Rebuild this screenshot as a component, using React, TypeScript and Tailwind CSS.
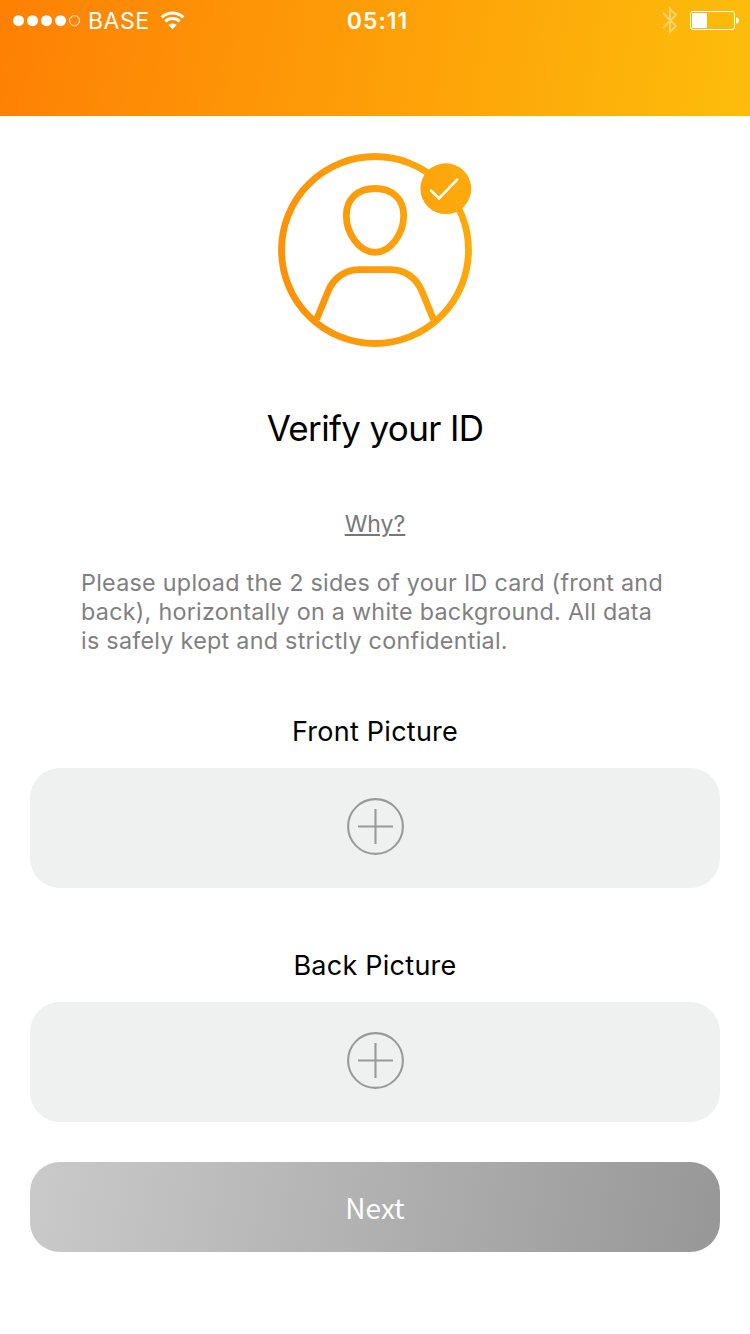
function PlusIcon() {
  return (
    <svg width="57" height="57" viewBox="0 0 57 57" fill="none" stroke="#999999" strokeWidth="2.1">
      <circle cx="28.5" cy="28.5" r="27.4" />
      <path d="M11 28.5H46M28.5 11V46" />
    </svg>
  );
}

function StatusBar() {
  return (
    <div className="relative flex h-[42px] items-center justify-between pl-[13px] pr-[10px] text-white">
      <div className="flex items-center">
        <svg width="67" height="12" viewBox="0 0 67 12" fill="currentColor">
          <circle cx="5.5" cy="5.7" r="5.5" />
          <circle cx="19.5" cy="5.7" r="5.5" />
          <circle cx="33.5" cy="5.7" r="5.5" />
          <circle cx="47.5" cy="5.7" r="5.5" />
          <circle cx="61.5" cy="5.7" r="5" fill="none" stroke="currentColor" />
        </svg>
        <span className="ml-[8px] w-[72px] text-[23px] leading-[42px] tracking-[0.5px]">BASE</span>
        <svg className="-mt-px" width="25" height="19" viewBox="0 0 25 19" fill="none" stroke="currentColor" strokeWidth="3">
          <path d="M1.6 6.3A15.8 15.8 0 0 1 23.4 6.3" />
          <path d="M5.3 10.3A10.5 10.5 0 0 1 19.7 10.3" />
          <path d="M12.5 18.3L8.3 14.1A6 6 0 0 1 16.7 14.1Z" fill="currentColor" stroke="none" />
        </svg>
      </div>
      <div className="flex items-center">
        <svg className="-mt-[2px]" width="16" height="27" viewBox="0 0 16 27" fill="none" stroke="#ffffff" strokeOpacity="0.4" strokeWidth="2">
          <path d="M1 6L14 19L8 25V2L14 8L1 21" />
        </svg>
        <svg className="ml-[12px]" width="50" height="20" viewBox="0 0 50 20">
          <rect x="0.5" y="0.5" width="44" height="18" rx="2.5" fill="none" stroke="#ffffff" />
          <rect x="2" y="2" width="15" height="15" rx="1" fill="#ffffff" />
          <path d="M46 6.5C48.2 6.5 49 8 49 9.5S48.2 12.5 46 12.5Z" fill="#ffffff" />
        </svg>
      </div>
      <div className="absolute inset-x-0 top-0 pl-[5px] text-center text-[23px] leading-[42px] font-semibold tracking-[1px]">05:11</div>
    </div>
  );
}

function IdBadge() {
  return (
    <svg width="194" height="194" viewBox="0 0 194 194" fill="none">
      <defs>
        <linearGradient id="amber" gradientUnits="userSpaceOnUse" x1="0" y1="110" x2="194" y2="84">
          <stop offset="0" stopColor="#fd9109" />
          <stop offset="1" stopColor="#fcaa0b" />
        </linearGradient>
      </defs>
      <g stroke="url(#amber)" strokeWidth="6.8">
        <circle cx="97" cy="97" r="93.5" />
        <path d="M97 35.5C80 35.5 68.3 46 68.3 62.5C68.3 80 81 99.3 97 99.3S125.7 80 125.7 62.5C125.7 46 114 35.5 97 35.5Z" />
        <path d="M38.5 166.5L50 138.5C56 124 68 116.700 81 116.700H113C126 116.700 138 124 144 138.500L155.500 166.500" />
      </g>
      <circle cx="167.8" cy="35.7" r="25.4" fill="url(#amber)" />
      <path d="M152.3 37L161 45.3L179.8 25.8" stroke="#ffffff" strokeWidth="2.6" />
    </svg>
  );
}

function UploadBox({ label }: { label: string }) {
  return (
    <section className="flex flex-col items-center">
      <h2 className="h-[54px] text-[27px] leading-[36px] tracking-[0.25px]">{label}</h2>
      <button className="flex h-[120px] w-full items-center justify-center rounded-[30px] bg-[#eff1f0] pb-[3px] pl-[1px]" aria-label={label}>
        <PlusIcon />
      </button>
    </section>
  );
}

export default function App() {
  return (
    <div className="flex h-[1334px] w-[750px] flex-col bg-white font-['Inter','Liberation_Sans',sans-serif] text-black">
      <header className="h-[116px] bg-[linear-gradient(100deg,#fe8004,#fdbd0b)]">
        <StatusBar />
      </header>
      <main className="flex flex-col px-[30px]">
        <div className="mt-[37px] flex justify-center">
          <IdBadge />
        </div>
        <h1 className="mt-[57px] text-center text-[35px] leading-[48px] tracking-[-0.65px]">Verify your ID</h1>
        <a className="mt-[57px] self-center text-[23px] leading-[30px] text-[#77777a] underline decoration-2 underline-offset-2">Why?</a>
        <p className="mt-[29px] pl-[51px] text-[23.3px] leading-[29px] tracking-[0.28px] text-[#808080]">
          Please upload the 2 sides of your ID card (front and<br />
          back), horizontally on a white background. All data<br />
          is safely kept and strictly confidential.
        </p>
        <div className="mt-[59px]">
          <UploadBox label="Front Picture" />
        </div>
        <div className="mt-[60px]">
          <UploadBox label="Back Picture" />
        </div>
        <button className="mt-[40px] h-[90px] rounded-[30px] bg-[linear-gradient(100deg,#cacaca,#979797)] font-['Noto_Sans_CJK_SC',sans-serif] text-[28px] leading-[90px] text-white">
          Next
        </button>
      </main>
    </div>
  );
}
